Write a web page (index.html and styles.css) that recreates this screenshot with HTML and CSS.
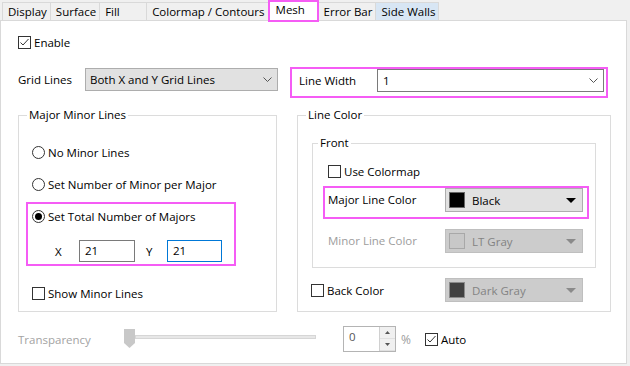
FILE: index.html
```html
<!DOCTYPE html>
<html lang="en">
<head>
  <meta charset="UTF-8" />
  <title>Mesh</title>
  <link rel="stylesheet" href="styles.css">
</head>
<body>
  <div class="tabs">
    <span class="tab">Display</span>
    <span class="tab">Surface</span>
    <span class="tab">Fill</span>
    <span class="tab">Colormap / Contours</span>
    <span class="tab tab-active">Mesh</span>
    <span class="tab">Error Bar</span>
    <span class="tab tab-hover">Side Walls</span>
  </div>

  <div class="panel">
    <div class="row enable">
      <span class="box"><svg width="11" height="11" viewBox="0 0 11 11"><polyline points="1.5,5.5 4,8 9.5,2" fill="none" stroke="#333" stroke-width="1" /></svg></span>
      <span>Enable</span>
    </div>

    <div class="top-row">
      <span class="grid-lbl">Grid Lines</span>
      <div class="select grid-select">
        <span>Both X and Y Grid Lines</span>
        <svg width="9" height="5" viewBox="0 0 9 5"><polyline points="0.5,0.5 4.5,4.5 8.5,0.5" fill="none" stroke="#555" /></svg>
      </div>
      <div class="hl width-box">
        <span class="width-lbl">Line Width</span>
        <div class="select white-select">
          <span>1</span>
          <svg width="9" height="5" viewBox="0 0 9 5"><polyline points="0.5,0.5 4.5,4.5 8.5,0.5" fill="none" stroke="#555" /></svg>
        </div>
      </div>
    </div>

    <div class="groups">
      <fieldset class="group">
        <legend>Major Minor Lines</legend>
        <div class="left-body">
          <div class="row"><span class="radio"></span><span>No Minor Lines</span></div>
          <div class="row gap12"><span class="radio"></span><span>Set Number of Minor per Major</span></div>
          <div class="hl majors-box">
            <div class="row"><span class="radio on"></span><span>Set Total Number of Majors</span></div>
            <div class="xy-row">
              <span class="axis">X</span>
              <span class="num">21</span>
              <span class="axis axis-y">Y</span>
              <span class="num num-focus">21</span>
            </div>
          </div>
          <div class="row show-minor"><span class="box"></span><span>Show Minor Lines</span></div>
        </div>
      </fieldset>

      <fieldset class="group">
        <legend>Line Color</legend>
        <div class="right-body">
          <fieldset class="front">
            <legend>Front</legend>
            <div class="front-body">
              <div class="row"><span class="box"></span><span>Use Colormap</span></div>
              <div class="hl major-box">
                <span class="color-lbl">Major Line Color</span>
                <div class="combo">
                  <span class="swatch sw-black"></span>
                  <span class="combo-text">Black</span>
                  <span class="tri"></span>
                </div>
              </div>
              <div class="color-row minor-row">
                <span class="color-lbl muted">Minor Line Color</span>
                <div class="combo combo-off">
                  <span class="swatch sw-light"></span>
                  <span class="combo-text">LT Gray</span>
                  <span class="tri"></span>
                </div>
              </div>
            </div>
          </fieldset>
          <div class="color-row back-row">
            <div class="row back-lbl"><span class="box"></span><span>Back Color</span></div>
            <div class="combo combo-off">
              <span class="swatch sw-dark"></span>
              <span class="combo-text">Dark Gray</span>
              <span class="tri"></span>
            </div>
          </div>
        </div>
      </fieldset>
    </div>

    <div class="bottom-row">
      <span class="trans-lbl">Transparency</span>
      <div class="slider">
        <svg width="11" height="19" viewBox="0 0 11 19"><polygon points="0,0 11,0 11,14 5.5,19 0,14" fill="#c8c8c8" /></svg>
        <span class="track"></span>
      </div>
      <div class="spin">
        <span class="spin-val">0</span>
        <div class="spin-btns">
          <span class="spin-btn"><svg width="5" height="3" viewBox="0 0 5 3"><polygon points="0,3 5,3 2.5,0" fill="#555" /></svg></span>
          <span class="spin-btn"><svg width="5" height="3" viewBox="0 0 5 3"><polygon points="0,0 5,0 2.5,3" fill="#555" /></svg></span>
        </div>
      </div>
      <span class="pct">%</span>
      <div class="row auto">
        <span class="box"><svg width="11" height="11" viewBox="0 0 11 11"><polyline points="1.5,5.5 4,8 9.5,2" fill="none" stroke="#333" stroke-width="1" /></svg></span>
        <span>Auto</span>
      </div>
    </div>
  </div>
</body>
</html>
```

FILE: styles.css
```css
* {
  margin: 0;
  padding: 0;
  box-sizing: border-box;
  font-family: "Open Sans", sans-serif;
}

body {
  width: 630px;
  height: 366px;
  overflow: hidden;
  background: #f0f0f0;
  color: #000;
  font-size: 11.5px;
}

/* tab strip */
.tabs {
  display: flex;
  align-items: flex-end;
  height: 20px;
  padding-left: 2px;
}

.tab {
  height: 18px;
  min-width: 48px;
  padding: 0 3px 0 5px;
  line-height: 17px;
  background: #f0f0f0;
  border: 1px solid #d9d9d9;
  border-bottom: none;
  margin-right: -1px;
  white-space: nowrap;
}

.tab-active {
  position: relative;
  z-index: 1;
  min-width: 51px;
  height: 22px;
  margin-bottom: -2px;
  padding-left: 6px;
  line-height: 16px;
  background: #fff;
  border: 2px solid #f55cf5;
}

.tab-hover {
  background: #d8e6f4;
}

/* page body */
.panel {
  width: 627px;
  height: 344px;
  background: #fff;
  border: 1px solid #d9d9d9;
  padding-left: 17px;
}

.row {
  display: flex;
  align-items: center;
  height: 20px;
  gap: 3px;
  white-space: nowrap;
}

.enable {
  margin-top: 11px;
}

.box {
  width: 13px;
  height: 13px;
  border: 1px solid #333;
  background: #fff;
  display: flex;
  align-items: center;
  justify-content: center;
  flex: none;
}

.radio {
  width: 13px;
  height: 13px;
  border: 1px solid #333;
  border-radius: 50%;
  display: flex;
  align-items: center;
  justify-content: center;
  flex: none;
}

.radio.on::after {
  content: "";
  width: 7px;
  height: 7px;
  border-radius: 50%;
  background: #000;
}

.hl {
  border: 2px solid #f55cf5;
}

/* grid lines / line width */
.top-row {
  display: flex;
  align-items: flex-start;
  margin-top: 15px;
  height: 31px;
}

.grid-lbl {
  width: 67px;
  line-height: 23px;
  margin-top: 1px;
}

.select {
  display: flex;
  align-items: center;
  justify-content: space-between;
  height: 23px;
  padding: 0 5px 0 4px;
  border: 1px solid #adadad;
  background: #e1e1e1;
}

.grid-select {
  width: 193px;
  margin-top: 1px;
}

.width-box {
  display: flex;
  align-items: flex-start;
  width: 318px;
  height: 31px;
  margin-left: 12px;
  padding-left: 7px;
}

.width-lbl {
  width: 78px;
  line-height: 23px;
}

.white-select {
  width: 227px;
  background: #fff;
  border-color: #7a7a7a;
  padding-left: 5px;
}

/* groups */
.groups {
  display: grid;
  grid-template-columns: 259px 314px;
  column-gap: 20px;
  margin-top: 9px;
  height: 205px;
}

fieldset {
  border: 1px solid #dcdcdc;
  min-width: 0;
}

legend {
  margin-left: 8px;
  padding: 0 2px;
  line-height: 16px;
}

.left-body {
  padding: 19px 0 0 13px;
}

.gap12 {
  margin-top: 12px;
}

.majors-box {
  width: 210px;
  margin: 8px 0 0 -6px;
  padding: 2px 0 2px 4px;
}

.xy-row {
  display: flex;
  align-items: center;
  height: 22px;
  margin-top: 14px;
  padding-left: 23px;
}

.axis {
  width: 24px;
}

.axis-y {
  width: 21px;
  margin-left: 11px;
}

.num {
  width: 56px;
  height: 22px;
  line-height: 20px;
  padding-left: 5px;
  border: 1px solid #7a7a7a;
}

.num-focus {
  width: 55px;
  border-color: #0078d7;
}

.show-minor {
  margin-top: 17px;
}

.right-body {
  padding: 12px 14px 0 14px;
}

.front legend {
  margin-left: 5px;
}

.front-body {
  padding: 10px 8px 14px 15px;
}

.major-box {
  display: flex;
  align-items: flex-start;
  width: 266px;
  height: 33px;
  margin: 5px 0 0 -5px;
  padding-left: 3px;
}

.color-lbl {
  width: 117px;
  line-height: 24px;
  white-space: nowrap;
}

.muted {
  color: #9d9d9d;
}

.color-row {
  display: flex;
  align-items: center;
}

.minor-row {
  margin-top: 10px;
}

.back-row {
  margin: 10px 0 0 -1px;
}

.back-lbl {
  width: 134px;
}

.combo {
  display: flex;
  align-items: center;
  width: 138px;
  height: 24px;
  padding: 0 6px 0 3px;
  background: #e1e1e1;
  border: 1px solid #adadad;
}

.combo-off {
  background: #cccccc;
  border-color: #bfbfbf;
  color: #838383;
}

.swatch {
  width: 16px;
  height: 16px;
  border: 1px solid #666;
  flex: none;
}

.sw-black { background: #000; }
.sw-light { background: #c8c8c8; border-color: #a8a8a8; }
.sw-dark { background: #404040; border-color: #8a8a8a; }

.combo-text {
  flex: 1;
  margin-left: 7px;
}

.tri {
  width: 0;
  height: 0;
  border-left: 5px solid transparent;
  border-right: 5px solid transparent;
  border-top: 5px solid #000;
}

.combo-off .tri {
  border-top-color: #8a8a8a;
}

/* transparency */
.bottom-row {
  display: flex;
  align-items: center;
  height: 26px;
  margin-top: 14px;
}

.trans-lbl {
  width: 106px;
  color: #a3a3a3;
}

.slider {
  display: flex;
  align-items: flex-start;
  width: 192px;
  height: 22px;
  padding-top: 1px;
}

.track {
  flex: 1;
  height: 4px;
  margin-top: 6px;
  background: #e7e7e7;
  border: 1px solid #d6d6d6;
}

.spin {
  display: flex;
  width: 53px;
  height: 26px;
  margin-left: 27px;
  border: 1px solid #b4b4b4;
}

.spin-val {
  flex: 1;
  padding: 2px 0 0 5px;
  color: #555;
}

.spin-btns {
  display: flex;
  flex-direction: column;
  width: 16px;
  border-left: 1px solid #d0d0d0;
}

.spin-btn {
  flex: 1;
  display: flex;
  align-items: center;
  justify-content: center;
  background: #f0f0f0;
  border-bottom: 1px solid #e0e0e0;
}

.pct {
  margin-left: 5px;
  font-size: 12px;
  color: #9d9d9d;
}

.auto {
  margin-left: 14px;
}
```
